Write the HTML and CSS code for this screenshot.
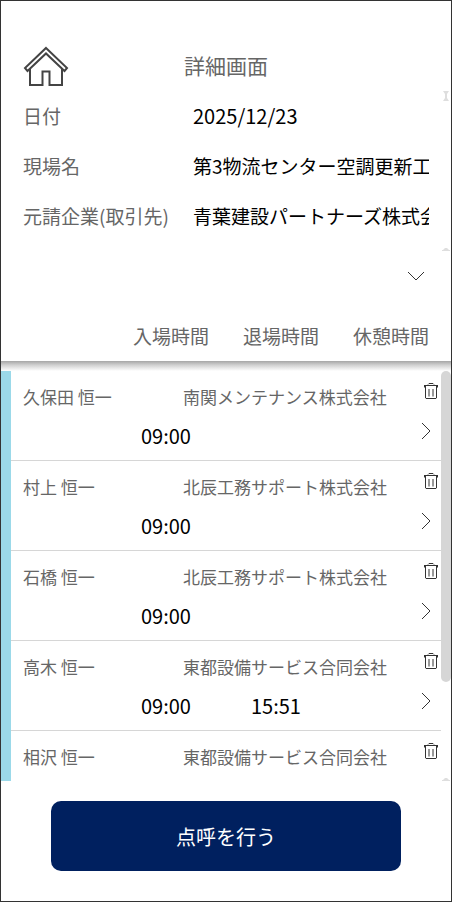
FILE: index.html
```html
<!DOCTYPE html>
<html lang="ja">
<head>
<meta charset="utf-8">
<meta name="viewport" content="width=device-width, initial-scale=1">
<title>詳細画面</title>
<link rel="stylesheet" href="styles.css">
</head>
<body>
<svg class="defs" aria-hidden="true">
  <symbol id="trash" viewBox="0 0 14 17">
    <path d="M0 2.500H14M.5 2V4.500M13.500 2V4.500M4 1.500L5 .500H9L10 1.500M1.500 2.500V15L2 15.500H12L12.500 15V2.500M5 6V13.500M9 6V13.500"/>
  </symbol>
  <symbol id="next" viewBox="0 0 10 18">
    <path d="M1 1L9 9L1 17"/>
  </symbol>
</svg>
<main class="screen">
  <header class="top">
    <button class="icon-btn home" type="button" aria-label="ホーム">
      <svg width="46" height="42" viewBox="0 0 46 42"><path d="M23 2L44 22L41.500 25L23 7.500L4.500 25L2 22ZM7 23V39H19.500V25.500H26.500V39H39V23"/></svg>
    </button>
    <h1 class="title">詳細画面</h1>
  </header>

  <section class="info">
    <div class="field"><label for="date">日付</label><input id="date" class="date" value="2025/12/23" readonly></div>
    <div class="field"><label for="site">現場名</label><input id="site" value="第3物流センター空調更新工" readonly></div>
    <div class="field"><label for="client">元請企業(取引先)</label><input id="client" value="青葉建設パートナーズ株式会" readonly></div>
    <svg class="mark mark-top" width="8" height="10" viewBox="0 0 8 10"><path d="M1 0H7L5 3V7L7 10H1L3 7V3Z"/></svg>
    <svg class="mark mark-bottom" width="8" height="4" viewBox="0 0 8 4"><path d="M0 4V3H1L3 1H5L7 3H8V4Z"/></svg>
  </section>

  <div class="expand">
    <button class="icon-btn" type="button" aria-label="開く">
      <svg width="18" height="10" viewBox="0 0 18 10"><path d="M1 1L9 9L17 1"/></svg>
    </button>
  </div>

  <div class="columns"><span>入場時間</span><span>退場時間</span><span>休憩時間</span></div>
  <div class="shade"></div>

  <section class="list">
    <ul class="rows">
      <li class="row">
        <div class="body"><div class="who"><span>久保田 恒一</span><span>南関メンテナンス株式会社</span></div><div class="times"><span>09:00</span></div></div>
        <div class="actions"><button class="icon-btn" type="button" aria-label="削除"><svg width="14" height="17"><use href="#trash"/></svg></button><button class="icon-btn next" type="button" aria-label="詳細"><svg width="10" height="18"><use href="#next"/></svg></button></div>
      </li>
      <li class="row">
        <div class="body"><div class="who"><span>村上 恒一</span><span>北辰工務サポート株式会社</span></div><div class="times"><span>09:00</span></div></div>
        <div class="actions"><button class="icon-btn" type="button" aria-label="削除"><svg width="14" height="17"><use href="#trash"/></svg></button><button class="icon-btn next" type="button" aria-label="詳細"><svg width="10" height="18"><use href="#next"/></svg></button></div>
      </li>
      <li class="row">
        <div class="body"><div class="who"><span>石橋 恒一</span><span>北辰工務サポート株式会社</span></div><div class="times"><span>09:00</span></div></div>
        <div class="actions"><button class="icon-btn" type="button" aria-label="削除"><svg width="14" height="17"><use href="#trash"/></svg></button><button class="icon-btn next" type="button" aria-label="詳細"><svg width="10" height="18"><use href="#next"/></svg></button></div>
      </li>
      <li class="row">
        <div class="body"><div class="who"><span>高木 恒一</span><span>東都設備サービス合同会社</span></div><div class="times"><span>09:00</span><span>15:51</span></div></div>
        <div class="actions"><button class="icon-btn" type="button" aria-label="削除"><svg width="14" height="17"><use href="#trash"/></svg></button><button class="icon-btn next" type="button" aria-label="詳細"><svg width="10" height="18"><use href="#next"/></svg></button></div>
      </li>
      <li class="row">
        <div class="body"><div class="who"><span>相沢 恒一</span><span>東都設備サービス合同会社</span></div></div>
        <div class="actions"><button class="icon-btn" type="button" aria-label="削除"><svg width="14" height="17"><use href="#trash"/></svg></button></div>
      </li>
    </ul>
    <div class="track"><div class="thumb"></div></div>
    <svg class="mark mark-bottom" width="8" height="4" viewBox="0 0 8 4"><path d="M0 4V3H1L3 1H5L7 3H8V4Z"/></svg>
  </section>

  <footer class="foot"><button class="primary" type="button">点呼を行う</button></footer>
</main>
</body>
</html>
```
FILE: styles.css
```css
* {
  box-sizing: border-box;
}

body {
  margin: 0;
  background: #fff;
  color: #666;
  font-family: "Noto Sans CJK JP", sans-serif;
  font-size: 19px;
}

.defs {
  position: absolute;
  width: 0;
  height: 0;
}

.screen {
  display: flex;
  flex-direction: column;
  min-height: 100vh;
  border: 1px solid #333;
}

.icon-btn {
  display: block;
  padding: 0;
  border: 0;
  background: none;
  line-height: 0;
}

.icon-btn svg {
  display: block;
  fill: none;
  stroke: #333;
  stroke-width: 1;
}

.home svg {
  stroke: #444;
  stroke-width: 2;
}

.top {
  display: grid;
  grid-template-columns: 161px 1fr;
  align-items: start;
  padding: 45px 22px 0;
  height: 90px;
}

.title {
  margin: 0;
  padding-top: 4px;
  font-size: 21px;
  font-weight: 400;
  line-height: 30px;
}

.info {
  position: relative;
  height: 160px;
  padding: 0 22px;
}

.field {
  display: grid;
  grid-template-columns: 170px 1fr;
  align-items: center;
  height: 50px;
  line-height: 28px;
  white-space: nowrap;
}

.field input {
  width: 100%;
  min-width: 0;
  height: 28px;
  padding: 0;
  border: 0;
  outline: 0;
  background: none;
  color: #000;
  font: inherit;
}

.field .date {
  font-size: 20px;
}

.mark {
  position: absolute;
  right: 1px;
  fill: #dedede;
}

.mark-top {
  top: 0;
}

.mark-bottom {
  bottom: 0;
}

.expand {
  display: flex;
  justify-content: flex-end;
  align-items: center;
  height: 50px;
  padding-right: 26px;
}

.columns {
  display: flex;
  justify-content: flex-end;
  gap: 34px;
  height: 60px;
  padding: 20px 22px 0;
  line-height: 30px;
}

.shade {
  height: 10px;
  background: linear-gradient(#a6a6a6, #d0d0d0 40%, #fff);
}

.list {
  position: relative;
  display: flex;
  flex: 1;
  border-left: 10px solid #9bd9e9;
}

.rows {
  flex: 1;
  margin: 0;
  padding: 0;
  list-style: none;
}

.row {
  display: flex;
  height: 90px;
  border-bottom: 1px solid #d6d6d6;
}

.row:last-child {
  height: 50px;
  border-bottom: 0;
}

.body {
  flex: 1;
  padding: 11px 0 0 12px;
}

.who {
  display: grid;
  grid-template-columns: 160px 1fr;
  font-size: 17px;
  line-height: 30px;
}

.times {
  display: grid;
  grid-template-columns: 110px 110px;
  padding: 9px 0 0 118px;
  color: #000;
  font-size: 20px;
  line-height: 30px;
}

.actions {
  display: flex;
  flex-direction: column;
  gap: 22px;
  width: 20px;
  padding-top: 12px;
  align-items: flex-start;
}

.actions .icon-btn {
  margin-left: 3px;
}

.actions .next {
  margin-left: 0;
}

.track {
  width: 10px;
}

.thumb {
  height: 311px;
  border-radius: 5px;
  background: #d6d6d6;
}

.foot {
  padding: 20px 50px 30px;
}

.primary {
  display: block;
  width: 100%;
  height: 70px;
  border: 0;
  border-radius: 10px;
  background: #00205f;
  color: #fff;
  font: inherit;
  font-size: 20px;
}
```
